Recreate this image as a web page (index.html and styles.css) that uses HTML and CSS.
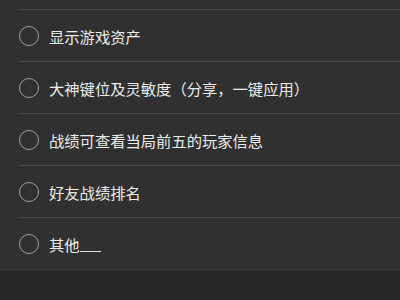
FILE: index.html
```html
<!DOCTYPE html>
<html lang="zh-CN">
<head>
<meta charset="utf-8">
<link rel="stylesheet" href="styles.css">
</head>
<body>
<div class="sheet">
  <ul class="options">
    <li class="option"><span class="radio"></span><span class="label">显示游戏资产</span></li>
    <li class="option"><span class="radio"></span><span class="label">大神键位及灵敏度（分享，一键应用）</span></li>
    <li class="option"><span class="radio"></span><span class="label">战绩可查看当局前五的玩家信息</span></li>
    <li class="option"><span class="radio"></span><span class="label">好友战绩排名</span></li>
    <li class="option"><span class="radio"></span><span class="label">其他<span class="blank"></span></span></li>
  </ul>
</div>
<div class="footer"></div>
</body>
</html>
```

FILE: styles.css
```css
html, body {
  margin: 0;
  padding: 0;
  background: #262626;
  height: 300px;
  overflow: hidden;
}
.sheet {
  background: #303030;
  padding-top: 9px;
  padding-bottom: 2px;
}
.options {
  list-style: none;
  margin: 0 0 0 19px;
  padding: 0;
}
.option {
  height: 52px;
  box-sizing: border-box;
  border-top: 1.5px solid #4b4b4b;
  display: flex;
  align-items: center;
  gap: 10px;
}
.radio {
  width: 20px;
  height: 20px;
  box-sizing: border-box;
  border: 1.5px solid #a0a0a0;
  border-radius: 50%;
  flex: none;
}
.label {
  font-family: "Noto Sans CJK SC", "Noto Sans", sans-serif;
  font-size: 15.3px;
  color: #ececec;
  line-height: 20px;
  white-space: nowrap;
  display: flex;
  align-items: flex-end;
}
.blank {
  display: inline-block;
  width: 21px;
  height: 0;
  border-bottom: 1.5px solid #e0e0e0;
  margin-bottom: 2px;
}
.footer {
  height: 29px;
  background: #262626;
}
```
